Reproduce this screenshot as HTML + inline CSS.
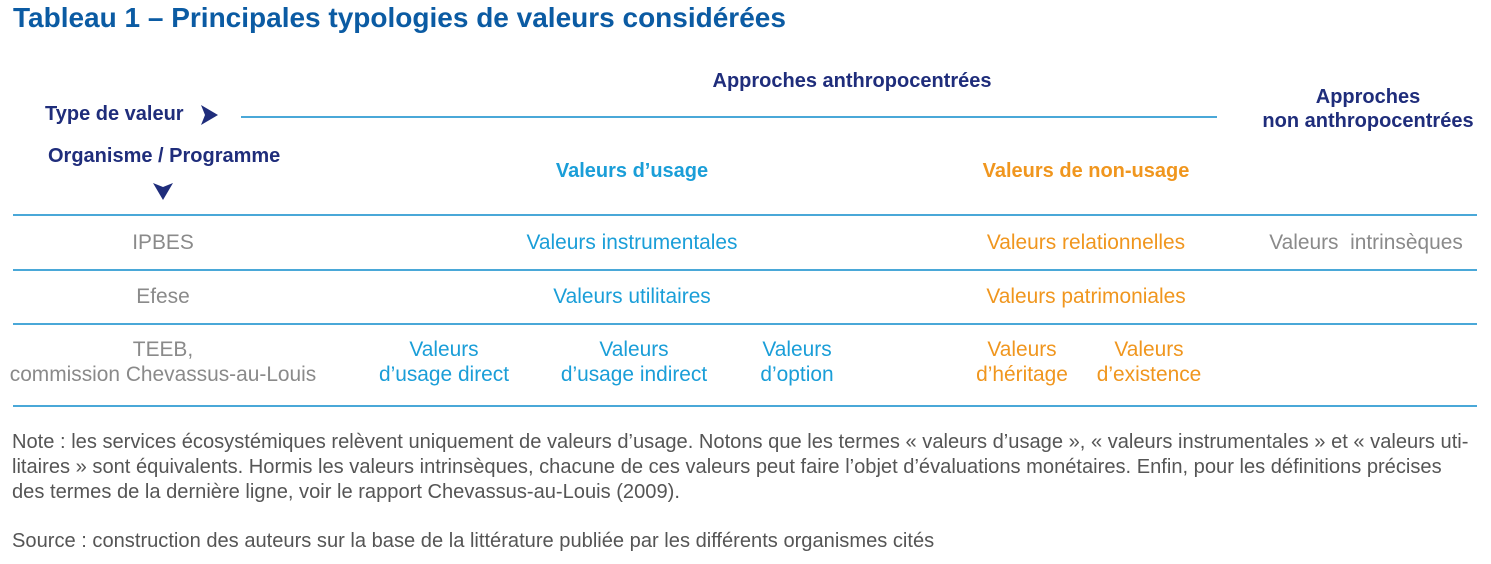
<!DOCTYPE html>
<html><head><meta charset="utf-8"><style>
body{margin:0;width:1491px;height:564px;background:#fff;position:relative;overflow:hidden;font-family:"Liberation Sans",Arial,sans-serif}
.a{position:absolute;white-space:nowrap}
.c{position:absolute;white-space:nowrap;transform:translateX(-50%);text-align:center;font-size:20.9px;line-height:25px}
.h{position:absolute;white-space:nowrap;font-weight:bold;font-size:20px;line-height:24px;color:#1f2d7b}
.line{position:absolute;height:2px;background:#4aa8d8}
.cy{color:#1a9ed8}.or{color:#f0961e}.gr{color:#8a8a8a}
.n{position:absolute;left:12px;font-size:20.1px;color:#555;white-space:nowrap;line-height:25px}
</style></head><body>
<div class="a" style="left:13px;top:2px;font-size:28px;font-weight:bold;color:#0b5ba3">Tableau 1 – Principales typologies de valeurs considérées</div>

<div class="h" style="left:852px;top:69px;transform:translateX(-50%)">Approches anthropocentrées</div>
<div class="h" style="left:45px;top:102px">Type de valeur</div>
<svg class="a" style="left:199px;top:104px" width="20" height="22" viewBox="0 0 20 22"><path d="M2 1 L19 11 L2 21 L6 11 Z" fill="#1f2d7b"/></svg>
<div class="line" style="left:241px;top:116px;width:976px"></div>
<div class="h" style="left:1368px;top:85px;transform:translateX(-50%);text-align:center">Approches<br>non anthropocentrées</div>
<div class="h" style="left:48px;top:144px">Organisme / Programme</div>
<svg class="a" style="left:152px;top:181px" width="22" height="20" viewBox="0 0 22 20"><path d="M1 2 L11 6 L21 2 L11 19 Z" fill="#1f2d7b"/></svg>
<div class="h" style="left:632px;top:159px;transform:translateX(-50%);color:#1a9ed8">Valeurs d’usage</div>
<div class="h" style="left:1086px;top:159px;transform:translateX(-50%);color:#f0961e">Valeurs de non-usage</div>

<div class="line" style="left:13px;top:214px;width:1464px"></div>
<div class="c gr" style="left:163px;top:230px">IPBES</div>
<div class="c cy" style="left:632px;top:230px">Valeurs instrumentales</div>
<div class="c or" style="left:1086px;top:230px">Valeurs relationnelles</div>
<div class="c gr" style="left:1366px;top:230px">Valeurs&nbsp; intrinsèques</div>

<div class="line" style="left:13px;top:269px;width:1464px"></div>
<div class="c gr" style="left:163px;top:284px">Efese</div>
<div class="c cy" style="left:632px;top:284px">Valeurs utilitaires</div>
<div class="c or" style="left:1086px;top:284px">Valeurs patrimoniales</div>

<div class="line" style="left:13px;top:323px;width:1464px"></div>
<div class="c gr" style="left:163px;top:337px">TEEB,<br>commission Chevassus-au-Louis</div>
<div class="c cy" style="left:444px;top:337px">Valeurs<br>d’usage direct</div>
<div class="c cy" style="left:634px;top:337px">Valeurs<br>d’usage indirect</div>
<div class="c cy" style="left:797px;top:337px">Valeurs<br>d’option</div>
<div class="c or" style="left:1022px;top:337px">Valeurs<br>d’héritage</div>
<div class="c or" style="left:1149px;top:337px">Valeurs<br>d’existence</div>
<div class="line" style="left:13px;top:405px;width:1464px"></div>

<div class="n" style="top:430px">Note : les services écosystémiques relèvent uniquement de valeurs d’usage. Notons que les termes « valeurs d’usage », « valeurs instrumentales » et « valeurs uti-</div>
<div class="n" style="top:455px">litaires » sont équivalents. Hormis les valeurs intrinsèques, chacune de ces valeurs peut faire l’objet d’évaluations monétaires. Enfin, pour les définitions précises</div>
<div class="n" style="top:480px">des termes de la dernière ligne, voir le rapport Chevassus-au-Louis (2009).</div>
<div class="n" style="top:529px">Source : construction des auteurs sur la base de la littérature publiée par les différents organismes cités</div>
</body></html>
